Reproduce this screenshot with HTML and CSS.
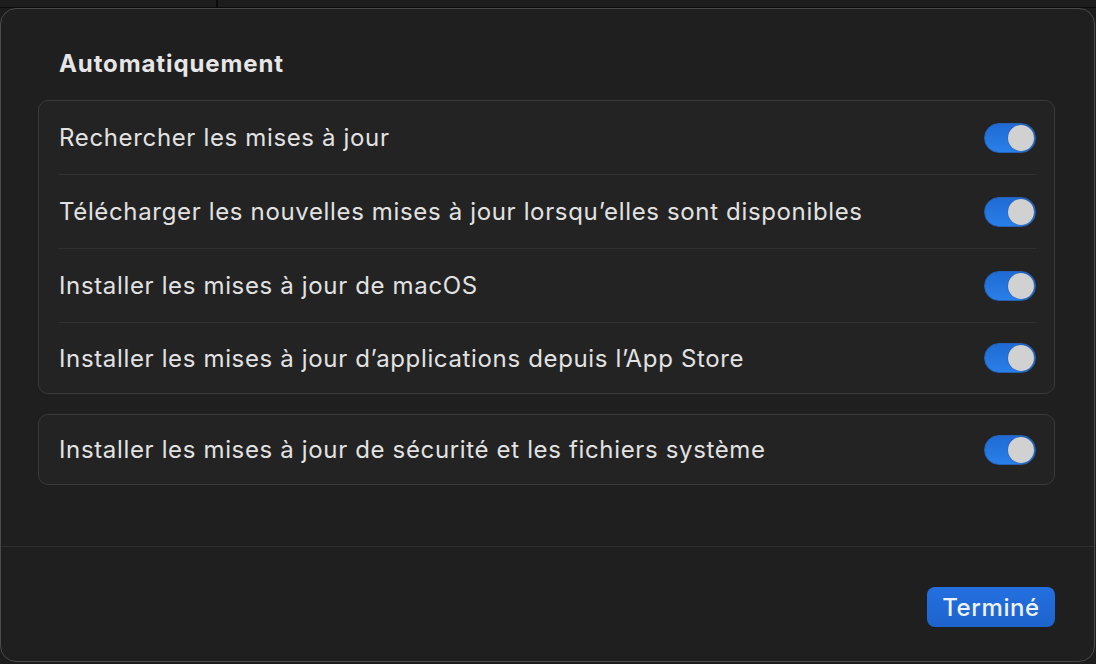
FILE: index.html
```html
<!DOCTYPE html>
<html lang="fr">
<head>
    <meta charset="UTF-8">
    <meta name="viewport" content="width=device-width, initial-scale=1.0">
    <title>Mises à jour automatiques</title>
    <link rel="stylesheet" href="styles.css">
</head>
<body>
    <!-- window behind the sheet -->
    <div class="backdrop">
        <div class="backdrop-side"></div>
        <div class="backdrop-main"></div>
    </div>

    <div class="sheet">
        <div class="sheet-content">
            <h2 class="section-title">Automatiquement</h2>

            <div class="group">
                <div class="row">
                    <span class="row-label">Rechercher les mises à jour</span>
                    <span class="toggle on"><span class="knob"></span></span>
                </div>
                <div class="row">
                    <span class="row-label">Télécharger les nouvelles mises à jour lorsqu’elles sont disponibles</span>
                    <span class="toggle on"><span class="knob"></span></span>
                </div>
                <div class="row">
                    <span class="row-label">Installer les mises à jour de macOS</span>
                    <span class="toggle on"><span class="knob"></span></span>
                </div>
                <div class="row">
                    <span class="row-label">Installer les mises à jour d’applications depuis l’App Store</span>
                    <span class="toggle on"><span class="knob"></span></span>
                </div>
            </div>

            <div class="group">
                <div class="row single">
                    <span class="row-label">Installer les mises à jour de sécurité et les fichiers système</span>
                    <span class="toggle on"><span class="knob"></span></span>
                </div>
            </div>
        </div>

        <div class="sheet-footer">
            <button class="done-button">Terminé</button>
        </div>
    </div>
</body>
</html>
```

FILE: styles.css
```css
html, body {
    margin: 0;
    padding: 0;
    height: 100%;
}
body {
    background-color: #1c1c1c;
    color: #e2e2e2;
    font-family: Inter, "Noto Sans", "Liberation Sans", sans-serif;
    overflow: hidden;
}
.backdrop {
    display: flex;
    height: 7px;
    border-bottom: 1px solid #0b0b0b;
}
.backdrop-side {
    width: 216px;
    border-right: 2px solid #0b0b0b;
}
.backdrop-main {
    flex: 1;
}
.sheet {
    display: flex;
    flex-direction: column;
    width: 1095px;
    height: 654px;
    box-sizing: border-box;
    background-color: #1f1f1f;
    border: 1px solid #4a4a4a;
    border-radius: 16px;
}
.sheet-content {
    flex: 1;
    padding: 40px 39px 0 37px;
}
.section-title {
    margin: 0 0 21px 21px;
    font-size: 24px;
    line-height: 30px;
    font-weight: 700;
    letter-spacing: 0.9px;
    color: #e6e6e6;
}
.group {
    background-color: #232323;
    border: 1px solid #3a3a3a;
    border-radius: 10px;
    padding: 0 18px 0 20px;
    margin-bottom: 20px;
}
.row {
    display: flex;
    align-items: center;
    justify-content: space-between;
    height: 73px;
    border-top: 1px solid #323232;
}
.row:first-child {
    border-top: none;
}
.row:last-child {
    height: 70px;
}
.row.single {
    height: 69px;
}
.row-label {
    font-size: 24px;
    letter-spacing: 0.65px;
}
.toggle {
    position: relative;
    display: block;
    width: 52px;
    height: 30px;
    box-sizing: border-box;
    border-radius: 15px;
    background: linear-gradient(#1f6bd4, #2a7fe8);
    border: 1px solid #2462b8;
}
.toggle .knob {
    position: absolute;
    top: 1px;
    right: 1px;
    width: 26px;
    height: 26px;
    border-radius: 50%;
    background-color: #d1d1d1;
    box-shadow: 0 0 1px rgba(0, 0, 0, 0.5);
}
.sheet-footer {
    display: flex;
    justify-content: flex-end;
    border-top: 1px solid #2e2e2e;
    height: 115px;
    box-sizing: border-box;
    padding: 40px 39px 0 0;
}
.done-button {
    width: 128px;
    height: 40px;
    border: none;
    border-radius: 8px;
    background: linear-gradient(#2470e0, #1d63cc);
    color: #eef4ff;
    font-family: Inter, "Noto Sans", "Liberation Sans", sans-serif;
    font-size: 24px;
    font-weight: 500;
    letter-spacing: 0.6px;
    cursor: pointer;
}
```
